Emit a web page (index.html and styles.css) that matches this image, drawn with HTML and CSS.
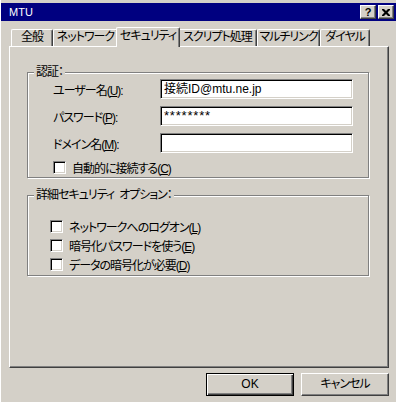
FILE: index.html
```html
<!DOCTYPE html>
<html lang="ja">
<head>
  <meta charset="UTF-8">
  <title>MTU</title>
  <link rel="stylesheet" href="styles.css">
</head>
<body>
  <div class="window">
    <!-- title bar -->
    <div class="title-bar">
      <span class="title">MTU</span>
      <div class="caption-buttons">
        <div class="caption-btn help">?</div>
        <div class="caption-btn close">
          <svg width="8" height="7" viewBox="0 0 8 7"><path d="M0 0h2l2 2 2-2h2v1L5.5 3.5 8 6v1H6L4 5 2 7H0V6l2.5-2.5L0 1z" fill="#000"/></svg>
        </div>
      </div>
    </div>

    <!-- tabs -->
    <div class="tabs">
      <div class="tab tab-general">全般</div>
      <div class="tab tab-network">ネットワーク</div>
      <div class="tab tab-security active">セキュリティ</div>
      <div class="tab tab-script">スクリプト処理</div>
      <div class="tab tab-multilink">マルチリンク</div>
      <div class="tab tab-dial">ダイヤル</div>
    </div>

    <div class="panel">
      <div class="group group-auth">
        <span class="group-label">認証：</span>
        <div class="field-row">
          <span class="field-label">ユーザー名(<u>U</u>):</span>
          <div class="text-box">接続ID@mtu.ne.jp</div>
        </div>
        <div class="field-row">
          <span class="field-label">パスワード(<u>P</u>):</span>
          <div class="text-box password">********</div>
        </div>
        <div class="field-row">
          <span class="field-label">ドメイン名(<u>M</u>):</span>
          <div class="text-box"></div>
        </div>
        <div class="check auto-connect">
          <span class="check-box"></span>
          <span class="check-text">自動的に接続する(<u>C</u>)</span>
        </div>
      </div>

      <div class="group group-advanced">
        <span class="group-label">詳細セキュリティ&ensp;オプション：</span>
        <div class="check">
          <span class="check-box"></span>
          <span class="check-text">ネットワークへのログオン(<u>L</u>)</span>
        </div>
        <div class="check">
          <span class="check-box"></span>
          <span class="check-text">暗号化パスワードを使う(<u>E</u>)</span>
        </div>
        <div class="check">
          <span class="check-box"></span>
          <span class="check-text">データの暗号化が必要(<u>D</u>)</span>
        </div>
      </div>
    </div>

    <div class="actions">
      <div class="btn default">OK</div>
      <div class="btn">キャンセル</div>
    </div>
  </div>
</body>
</html>
```

FILE: styles.css
```css
body {
  margin: 0;
  padding: 0;
  background-color: #d4d0c8;
  font-family: "Liberation Sans", "Noto Sans CJK JP", sans-serif;
  font-size: 12px;
  font-feature-settings: "palt" 1;
  color: #000;
}
.window {
  width: 396px;
  height: 402px;
  box-sizing: border-box;
  border-left: 1px solid #ffffff;
  padding-top: 3px;
  background-color: #d4d0c8;
}
.title-bar {
  height: 18px;
  background-color: #000080;
  color: #ffffff;
  display: flex;
  align-items: center;
  justify-content: space-between;
  padding-left: 8px;
  padding-right: 2px;
}
.title {
  font-size: 11px;
}
.caption-buttons {
  display: flex;
  gap: 2px;
}
.caption-btn {
  width: 16px;
  height: 14px;
  box-sizing: border-box;
  background-color: #d4d0c8;
  border-top: 1px solid #ffffff;
  border-left: 1px solid #ffffff;
  border-right: 1px solid #404040;
  border-bottom: 1px solid #404040;
  box-shadow: inset -1px -1px 0 #808080;
  display: flex;
  align-items: center;
  justify-content: center;
  color: #000;
}
.caption-btn.help {
  font-weight: bold;
  font-size: 11px;
  line-height: 12px;
}

/* tabs */
.tabs {
  display: flex;
  align-items: flex-end;
  height: 25px;
  margin-left: 10px;
}
.tab {
  height: 17px;
  box-sizing: border-box;
  border-top: 1px solid #ffffff;
  border-left: 1px solid #ffffff;
  border-right: 1px solid #404040;
  border-top-left-radius: 2px;
  border-top-right-radius: 2px;
  box-shadow: inset -1px 0 0 #808080;
  text-align: center;
  line-height: 15px;
  letter-spacing: -1px;
  white-space: nowrap;
}
.tab-general { width: 42px; }
.tab-network { width: 65px; }
.tab-security { width: 60px; }
.tab-script { width: 79px; }
.tab-multilink { width: 63px; }
.tab-dial { width: 50px; }
.tab.active {
  height: 20px;
  width: 64px;
  margin: 0 -2px -1px -2px;
  position: relative;
  z-index: 2;
  background-color: #d4d0c8;
  line-height: 17px;
}

.panel {
  margin-left: 8px;
  width: 380px;
  height: 322px;
  box-sizing: border-box;
  border-top: 1px solid #ffffff;
  border-left: 1px solid #ffffff;
  border-right: 1px solid #404040;
  border-bottom: 1px solid #404040;
  box-shadow: inset -1px -1px 0 #808080;
  padding: 25px 0 0 17px;
}

/* group boxes */
.group {
  position: relative;
  width: 342px;
  box-sizing: border-box;
  border: 1px solid #808080;
  box-shadow: inset 1px 1px 0 #ffffff, 1px 1px 0 #ffffff;
}
.group-label {
  position: absolute;
  top: -9px;
  left: 6px;
  padding: 0 2px;
  background-color: #d4d0c8;
  line-height: 16px;
  letter-spacing: -1px;
}
.group-auth {
  height: 106px;
  padding: 6px 0 0 25px;
}
.group-advanced {
  height: 81px;
  margin-top: 17px;
  padding: 21px 0 0 22px;
}
.field-row {
  display: flex;
  align-items: center;
  height: 20px;
  margin-bottom: 7px;
}
.field-label {
  width: 107px;
  letter-spacing: -1px;
}
.text-box {
  width: 193px;
  height: 20px;
  box-sizing: border-box;
  background-color: #ffffff;
  border-top: 1px solid #808080;
  border-left: 1px solid #808080;
  border-right: 1px solid #ffffff;
  border-bottom: 1px solid #ffffff;
  box-shadow: inset 1px 1px 0 #000000, inset -1px -1px 0 #d4d0c8;
  padding-left: 3px;
  line-height: 18px;
  white-space: nowrap;
}
.text-box.password {
  font-size: 13px;
  letter-spacing: 0.8px;
}

/* checkboxes */
.check {
  display: flex;
  align-items: center;
  gap: 6px;
  height: 19px;
}
.check-text {
  letter-spacing: -1px;
}
.auto-connect {
  margin-top: -2px;
}
.check-box {
  width: 13px;
  height: 13px;
  box-sizing: border-box;
  background-color: #ffffff;
  border-top: 1px solid #808080;
  border-left: 1px solid #808080;
  border-right: 1px solid #ffffff;
  border-bottom: 1px solid #ffffff;
  box-shadow: inset 1px 1px 0 #000000, inset -1px -1px 0 #d4d0c8;
}

/* bottom buttons */
.actions {
  display: flex;
  justify-content: flex-end;
  gap: 7px;
  margin-top: 5px;
  padding-right: 7px;
}
.btn {
  width: 88px;
  height: 23px;
  box-sizing: border-box;
  border-top: 1px solid #ffffff;
  border-left: 1px solid #ffffff;
  border-right: 1px solid #404040;
  border-bottom: 1px solid #404040;
  box-shadow: inset -1px -1px 0 #808080;
  text-align: center;
  line-height: 21px;
  letter-spacing: -1px;
}
.btn.default {
  border: 1px solid #000000;
  box-shadow: inset 1px 1px 0 #ffffff, inset -1px -1px 0 #404040, inset -2px -2px 0 #808080;
  letter-spacing: 0;
}
```
